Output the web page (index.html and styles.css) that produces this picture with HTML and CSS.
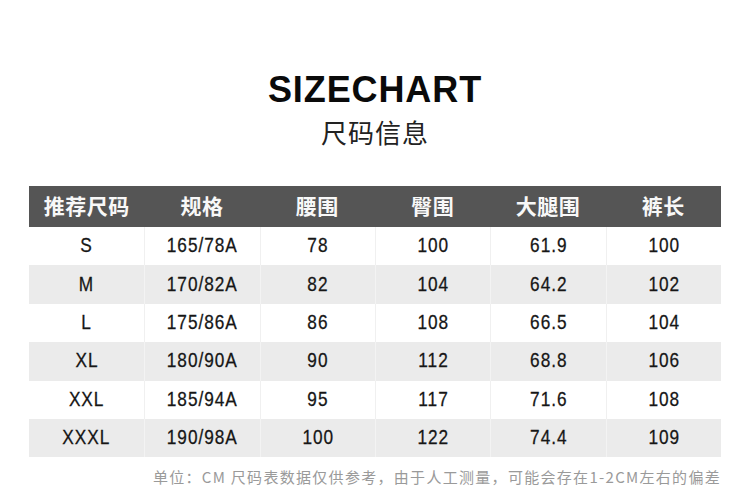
FILE: index.html
```html
<!DOCTYPE html>
<html lang="zh">
<head>
<meta charset="utf-8">
<link rel="stylesheet" href="styles.css">
</head>
<body>
<div class="page">
  <h1 class="title">SIZECHART</h1>
  <div class="subtitle">尺码信息</div>
  <div class="table">
    <div class="row head">
      <div class="cell">推荐尺码</div><div class="cell">规格</div><div class="cell">腰围</div><div class="cell">臀围</div><div class="cell">大腿围</div><div class="cell">裤长</div>
    </div>
    <div class="row">
      <div class="cell"><span class="num">S</span></div><div class="cell"><span class="num">165/78A</span></div><div class="cell"><span class="num">78</span></div><div class="cell"><span class="num">100</span></div><div class="cell"><span class="num">61.9</span></div><div class="cell"><span class="num">100</span></div>
    </div>
    <div class="row alt">
      <div class="cell"><span class="num">M</span></div><div class="cell"><span class="num">170/82A</span></div><div class="cell"><span class="num">82</span></div><div class="cell"><span class="num">104</span></div><div class="cell"><span class="num">64.2</span></div><div class="cell"><span class="num">102</span></div>
    </div>
    <div class="row">
      <div class="cell"><span class="num">L</span></div><div class="cell"><span class="num">175/86A</span></div><div class="cell"><span class="num">86</span></div><div class="cell"><span class="num">108</span></div><div class="cell"><span class="num">66.5</span></div><div class="cell"><span class="num">104</span></div>
    </div>
    <div class="row alt">
      <div class="cell"><span class="num">XL</span></div><div class="cell"><span class="num">180/90A</span></div><div class="cell"><span class="num">90</span></div><div class="cell"><span class="num">112</span></div><div class="cell"><span class="num">68.8</span></div><div class="cell"><span class="num">106</span></div>
    </div>
    <div class="row">
      <div class="cell"><span class="num">XXL</span></div><div class="cell"><span class="num">185/94A</span></div><div class="cell"><span class="num">95</span></div><div class="cell"><span class="num">117</span></div><div class="cell"><span class="num">71.6</span></div><div class="cell"><span class="num">108</span></div>
    </div>
    <div class="row alt">
      <div class="cell"><span class="num">XXXL</span></div><div class="cell"><span class="num">190/98A</span></div><div class="cell"><span class="num">100</span></div><div class="cell"><span class="num">122</span></div><div class="cell"><span class="num">74.4</span></div><div class="cell"><span class="num">109</span></div>
    </div>
  </div>
  <p class="note">单位：CM 尺码表数据仅供参考，由于人工测量，可能会存在1-2CM左右的偏差</p>
</div>
</body>
</html>
```
FILE: styles.css
```css
html, body {
  margin: 0;
  padding: 0;
  background: #ffffff;
}
.page {
  width: 750px;
  height: 487px;
  box-sizing: border-box;
  padding: 70px 29px 0 29px;
  display: flex;
  flex-direction: column;
  align-items: center;
  overflow: hidden;
}
.title {
  margin: 0;
  font-family: "Liberation Sans", Arial, sans-serif;
  font-weight: 700;
  font-size: 36px;
  letter-spacing: 0.9px;
  line-height: 40px;
  color: #0a0a0a;
}
.subtitle {
  margin-top: 4px;
  font-family: "Noto Sans CJK SC", sans-serif;
  font-size: 26px;
  line-height: 36px;
  color: #222;
  letter-spacing: 1px;
}
.table {
  margin-top: 36px;
  width: 692px;
  display: flex;
  flex-direction: column;
}
.row {
  display: grid;
  grid-template-columns: repeat(6, 1fr);
  height: 38.4px;
  background: #ffffff;
}
.row.alt {
  background: #ebebeb;
}
.row.head {
  height: 41px;
  background: #555555;
}
.cell {
  display: flex;
  align-items: center;
  justify-content: center;
  border-left: 1px solid #f0f0f0;
}
.row.alt .cell {
  border-left-color: #f3f3f3;
}
.cell:first-child {
  border-left: none;
}
.num {
  display: inline-block;
  font-family: "Liberation Sans", Arial, sans-serif;
  font-size: 21px;
  line-height: 24px;
  letter-spacing: 1.2px;
  color: #161616;
  -webkit-text-stroke: 0.3px #161616;
  transform: scaleX(0.82);
  margin-top: -2px;
}
.row.head .cell {
  font-family: "Noto Sans CJK SC", sans-serif;
  font-weight: 700;
  font-size: 21px;
  letter-spacing: 0.5px;
  color: #f8f8f8;
  border-left: none;
  padding-bottom: 4px;
}
.note {
  align-self: flex-end;
  margin: 10px 0 0 0;
  font-family: "Noto Sans CJK SC", sans-serif;
  font-size: 15px;
  line-height: 20px;
  letter-spacing: 1.3px;
  color: #9a9a9a;
}
```
